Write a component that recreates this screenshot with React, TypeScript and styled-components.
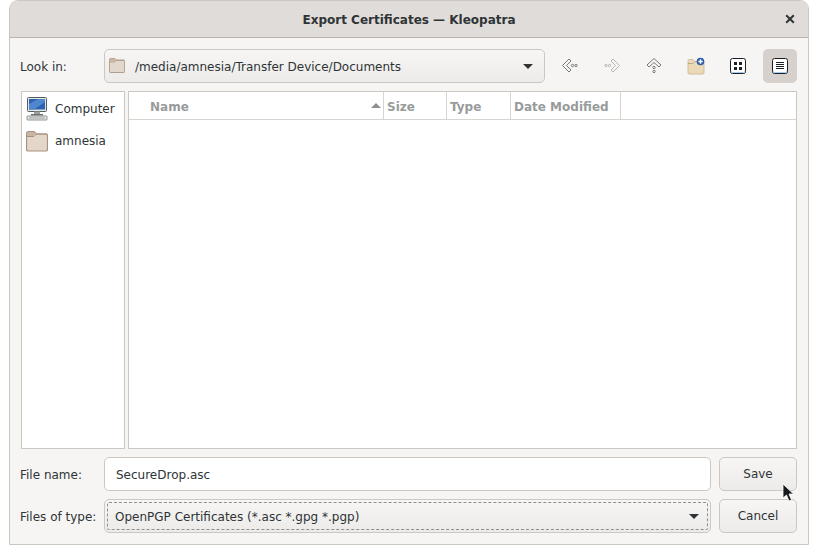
import styled, { createGlobalStyle } from "styled-components";

const GlobalStyle = createGlobalStyle`
    html, body {
        margin: 0;
        padding: 0;
        background: #ffffff;
    }
    body {
        font-family: "DejaVu Sans", "Liberation Sans", sans-serif;
        font-size: 13px;
        color: #2e3436;
    }
`

const columns = [
    { name: "Name", width: 255, sorted: true },
    { name: "Size", width: 63, sorted: false },
    { name: "Type", width: 64, sorted: false },
    { name: "Date Modified", width: 110, sorted: false },
];

const FolderIcon = ({ size }: { size: number }) => (
    <svg width={size} height={size * 21 / 22} viewBox="1 2.500 22 21">
        <path d="M1.5 5.5 Q1.5 3 4 3 H9 L11.5 5.5 H21 Q22.500 5.500 22.500 7 V21 Q22.500 22.500 21 22.500 H3 Q1.500 22.500 1.500 21 Z" fill="#e3d7cb" stroke="#a8917e" strokeWidth="1.200" />
        <path d="M1.500 8 H9 L11.500 5.500 H22" fill="none" stroke="#a8917e" strokeWidth="1" />
        <path d="M2 5 Q2 3.500 4 3.500 H9 L11 5.500 L9 7.500 H2 Z" fill="#c9b5a3" />
    </svg>
);

const ComputerIcon = () => (
    <svg width="22" height="24" viewBox="0 0 22 24">
        <rect x="1.500" y="0.500" width="19" height="14" rx="1" fill="#e4e6e4" stroke="#555d60" />
        <rect x="3" y="2" width="16" height="10.500" fill="#2b62b4" />
        <path d="M3 12.500 V7 L12 2 H19 V5 L8 12.500 Z" fill="#4f86cf" />
        <rect x="8" y="14.500" width="6" height="3" fill="#9aa0a0" />
        <rect x="5" y="17" width="12" height="1.500" fill="#6a7072" />
        <rect x="1" y="19" width="20" height="4" rx="0.500" fill="#e8e8e6" stroke="#777d7e" strokeWidth="0.800" />
        <path d="M3 21 H19" stroke="#8a9091" strokeWidth="0.800" />
    </svg>
);

const BackIcon = () => (
    <svg width="16" height="16" viewBox="0 0 16 16" fill="none" stroke="#777b7b" strokeWidth="1">
        <path d="M7 1 L0.500 7.500 L7 14 L9 12 L4.500 7.500 L9 3 Z" />
        <circle cx="10.500" cy="7.500" r="1.200" />
        <circle cx="14" cy="7.500" r="1.200" />
    </svg>
);

const ForwardIcon = () => (
    <svg width="16" height="16" viewBox="0 0 16 16" fill="none" stroke="#b5b7b6" strokeWidth="1">
        <path d="M9 1 L15.500 7.500 L9 14 L7 12 L11.500 7.500 L7 3 Z" />
        <circle cx="5.500" cy="7.500" r="1.200" />
        <circle cx="2" cy="7.500" r="1.200" />
    </svg>
);

const UpIcon = () => (
    <svg width="16" height="16" viewBox="0 0 16 16" fill="none" stroke="#777b7b" strokeWidth="1">
        <path d="M8 0.500 L15 7 L13 9 L8 4.500 L3 9 L1 7 Z" />
        <circle cx="8" cy="9.500" r="1.200" />
        <circle cx="8" cy="13.500" r="1.200" />
    </svg>
);

const NewFolderIcon = () => (
    <svg width="18" height="18" viewBox="0 0 18 18">
        <path d="M1 4 Q1 2.500 2.500 2.500 H6 L8 4.500 H16 Q17 4.500 17 5.500 V16 Q17 17 16 17 H2 Q1 17 1 16 Z" fill="#ecd9b6" stroke="#c9b48f" strokeWidth="0.800" />
        <path d="M1 6.500 L6 6.500 L8 4.500 H12" fill="none" stroke="#bda987" strokeWidth="1" />
        <circle cx="13.500" cy="4.500" r="3.800" fill="#2a5ea8" />
        <path d="M13.500 2.300 V6.700 M11.300 4.500 H15.700" stroke="#ffffff" strokeWidth="1.400" />
    </svg>
);

const GridIcon = () => (
    <svg width="16" height="16" viewBox="0 0 16 16">
        <rect x="0.500" y="0.500" width="15" height="15" rx="2" fill="#ffffff" stroke="#1c2024" />
        <path d="M1.500 13 V14.500 H14.500 V13" fill="none" stroke="#a9cdf0" />
        <rect x="4" y="4" width="3" height="3" fill="#1c2024" />
        <rect x="9" y="4" width="3" height="3" fill="#1c2024" />
        <rect x="4" y="9" width="3" height="3" fill="#1c2024" />
        <rect x="9" y="9" width="3" height="3" fill="#1c2024" />
    </svg>
);

const ListIcon = () => (
    <svg width="16" height="16" viewBox="0 0 16 16">
        <rect x="0.500" y="0.500" width="15" height="15" rx="2" fill="#ffffff" stroke="#1c2024" />
        <path d="M1.500 13 V14.500 H14.500 V13" fill="none" stroke="#a9cdf0" />
        <path d="M4 4.500 H12 M4 6.500 H12 M4 8.500 H12 M4 10.500 H12" stroke="#1c2024" />
    </svg>
);

const CloseIcon = () => (
    <svg width="10" height="10" viewBox="0 0 10 10">
        <path d="M1.200 1.200 L8.800 8.800 M8.800 1.200 L1.200 8.800" stroke="#2e3436" strokeWidth="2" />
    </svg>
);

const CursorIcon = () => (
    <svg width="14" height="20" viewBox="0 0 14 20">
        <path d="M1 1 V15 L4.500 12 L7 18 L9.500 17 L7 11 H11.500 Z" fill="#17191a" stroke="#ffffff" strokeWidth="0.800" />
    </svg>
);

export default function App() {
    return (
        <>
            <GlobalStyle />
            <Window>
                <TitleBar>
                    <Title>Export Certificates — Kleopatra</Title>
                    <CloseButton><CloseIcon /></CloseButton>
                </TitleBar>
                <Body>
                    <Row>
                        <Label>Look in:</Label>
                        <PathCombo>
                            <FolderIcon size={16} />
                            <PathText>/media/amnesia/Transfer Device/Documents</PathText>
                            <Arrow />
                        </PathCombo>
                        <Tools>
                            <ToolButton><BackIcon /></ToolButton>
                            <ToolButton><ForwardIcon /></ToolButton>
                            <ToolButton><UpIcon /></ToolButton>
                            <ToolButton><NewFolderIcon /></ToolButton>
                            <ToolButton><GridIcon /></ToolButton>
                            <ToolButton $active><ListIcon /></ToolButton>
                        </Tools>
                    </Row>
                    <Panes>
                        <Sidebar>
                            <Place>
                                <PlaceIcon><ComputerIcon /></PlaceIcon>
                                Computer
                            </Place>
                            <Place>
                                <PlaceIcon><FolderIcon size={22} /></PlaceIcon>
                                amnesia
                            </Place>
                        </Sidebar>
                        <FileList>
                            <ListHeader>
                                {columns.map((col) => (
                                    <Column key={col.name} style={{ width: col.width }} $first={col.sorted}>
                                        {col.name}
                                        {col.sorted && <SortArrow />}
                                    </Column>
                                ))}
                            </ListHeader>
                        </FileList>
                    </Panes>
                    <Row>
                        <Label>File name:</Label>
                        <NameInput defaultValue="SecureDrop.asc" />
                        <ActionButton>Save</ActionButton>
                    </Row>
                    <Row>
                        <Label>Files of type:</Label>
                        <TypeCombo>
                            <TypeFocus>
                                <TypeText>OpenPGP Certificates (*.asc *.gpg *.pgp)</TypeText>
                                <Arrow />
                            </TypeFocus>
                        </TypeCombo>
                        <ActionButton>Cancel</ActionButton>
                    </Row>
                </Body>
                <Cursor><CursorIcon /></Cursor>
            </Window>
        </>
    )
}

const Window = styled.div`
    position: relative;
    box-sizing: border-box;
    width: 800px;
    height: 545px;
    margin-left: 9px;
    display: flex;
    flex-direction: column;
    background: #f6f5f4;
    border: 1px solid #cdc7c2;
    border-radius: 9px 9px 0 0;
    overflow: hidden;
`

const TitleBar = styled.header`
    position: relative;
    box-sizing: border-box;
    height: 37px;
    flex: none;
    display: flex;
    align-items: center;
    justify-content: center;
    padding-top: 2px;
    background: #e0dcd9;
    border-bottom: 1px solid #b9b3ae;
`

const Title = styled.h1`
    margin: 0;
    font-size: 12px;
    font-weight: 700;
    color: #2e3436;
`

const CloseButton = styled.span`
    position: absolute;
    right: 13px;
    top: 13px;
    display: flex;
`

const Body = styled.main`
    flex: 1;
    min-height: 0;
    display: flex;
    flex-direction: column;
    gap: 8px;
    padding: 11px 11px 11px 10px;
`

const Row = styled.div`
    display: flex;
    align-items: center;
    height: 34px;
    flex: none;
`

const Label = styled.label`
    width: 84px;
    flex: none;
    padding-top: 1px;
    font-size: 12px;
    color: #2e3436;
`

const PathCombo = styled.div`
    box-sizing: border-box;
    width: 441px;
    height: 34px;
    display: flex;
    align-items: center;
    padding: 0 11px 0 4px;
    background: linear-gradient(#f7f6f5, #edebe9);
    border: 1px solid #cdc7c2;
    border-radius: 5px;
`

const PathText = styled.span`
    flex: 1;
    margin-left: 10px;
    padding-top: 1px;
    font-size: 12px;
`

const Arrow = styled.span`
    width: 0;
    height: 0;
    border-left: 5.500px solid transparent;
    border-right: 5.500px solid transparent;
    border-top: 5px solid #2e3436;
`

const Tools = styled.div`
    display: flex;
    gap: 8px;
    margin-left: 8px;
`

const ToolButton = styled.span<{ $active?: boolean }>`
    width: 34px;
    height: 34px;
    display: flex;
    align-items: center;
    justify-content: center;
    border-radius: 5px;
    background: ${props => props.$active ? "#d6d1cd" : "transparent"};
`

const Panes = styled.div`
    flex: 1;
    min-height: 0;
    display: flex;
    gap: 3px;
    margin-left: 1px;
`

const Sidebar = styled.nav`
    box-sizing: border-box;
    width: 104px;
    padding-top: 1px;
    background: #ffffff;
    border: 1px solid #cdc7c2;
`

const Place = styled.div`
    height: 32px;
    display: flex;
    align-items: center;
    gap: 7px;
    padding-left: 4px;
    font-size: 12px;
`

const PlaceIcon = styled.span`
    width: 22px;
    display: flex;
    justify-content: center;
`

const FileList = styled.section`
    box-sizing: border-box;
    flex: 1;
    background: #ffffff;
    border: 1px solid #cdc7c2;
`

const ListHeader = styled.div`
    box-sizing: border-box;
    height: 28px;
    display: flex;
    border-bottom: 1px solid #d8d4d0;
`

const Column = styled.div<{ $first?: boolean }>`
    box-sizing: border-box;
    display: flex;
    align-items: center;
    justify-content: space-between;
    padding: 2px ${props => props.$first ? "2px" : "3px"} 0 ${props => props.$first ? "21px" : "3px"};
    font-size: 12px;
    font-weight: 700;
    color: #989b9b;
    border-right: 1px solid #d8d4d0;
`

const SortArrow = styled.span`
    width: 0;
    height: 0;
    margin-bottom: 2px;
    border-left: 5px solid transparent;
    border-right: 5px solid transparent;
    border-bottom: 5px solid #8e9191;
`

const NameInput = styled.input`
    box-sizing: border-box;
    width: 607px;
    height: 34px;
    padding: 1px 11px 0;
    font-family: inherit;
    font-size: 12px;
    color: #2e3436;
    background: #ffffff;
    border: 1px solid #cdc7c2;
    border-radius: 5px;
    outline: none;
`

const ActionButton = styled.button`
    box-sizing: border-box;
    width: 78px;
    height: 34px;
    margin-left: 8px;
    padding: 0;
    font-family: inherit;
    font-size: 12px;
    color: #2e3436;
    background: linear-gradient(#f7f6f5, #edebe9);
    border: 1px solid #cdc7c2;
    border-radius: 5px;
`

const TypeCombo = styled.div`
    box-sizing: border-box;
    width: 607px;
    height: 34px;
    padding: 2px;
    background: linear-gradient(#f7f6f5, #edebe9);
    border: 1px solid #cdc7c2;
    border-radius: 5px;
`

const TypeFocus = styled.div`
    box-sizing: border-box;
    height: 100%;
    display: flex;
    align-items: center;
    padding: 0 8px 0 7px;
    border: 1px dashed #8f8f8c;
    border-radius: 2px;
`

const TypeText = styled.span`
    flex: 1;
    padding-top: 1px;
    font-size: 12px;
`

const Cursor = styled.span`
    position: absolute;
    left: 772px;
    top: 482px;
    display: flex;
`
